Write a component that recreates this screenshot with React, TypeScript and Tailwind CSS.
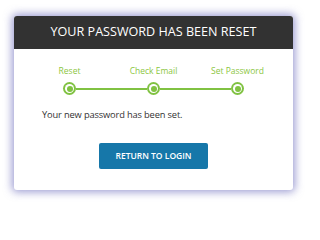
import React from "react";

const GREEN = "bg-[#80c242]";

function Step({ label, first, last }: { label: string; first?: boolean; last?: boolean }) {
  return (
    <div className="flex flex-col items-center">
      <div className="h-[12px] text-[8.5px] leading-[12px] text-[#8cc63f] whitespace-nowrap">{label}</div>
      <div className="mt-[5px] flex w-full items-center">
        <div className={`h-[2px] flex-1 ${first ? "" : GREEN}`} />
        <div className={`flex h-[13px] w-[13px] items-center justify-center rounded-full ${GREEN}`}>
          <div className="flex h-[9px] w-[9px] items-center justify-center rounded-full bg-white">
            <div className={`h-[6px] w-[6px] rounded-full ${GREEN}`} />
          </div>
        </div>
        <div className={`h-[2px] flex-1 ${last ? "" : GREEN}`} />
      </div>
    </div>
  );
}

export default function App() {
  return (
    <div
      className="h-[202px] w-[306px] bg-white pl-[14px] pt-[16px]"
      style={{ fontFamily: '"Open Sans", "Liberation Sans", sans-serif' }}
    >
      <div className="h-[174px] w-[279px] overflow-hidden rounded-[3px] bg-white shadow-[0_0_9px_2px_rgba(90,90,180,0.6)]">
        <div className="flex h-[33px] items-center justify-center bg-[#323232] text-[12.6px] text-white">
          YOUR PASSWORD HAS BEEN RESET
        </div>
        <div className="mx-auto mt-[16px] grid w-[252px] grid-cols-3">
          <Step label="Reset" first />
          <Step label="Check Email" />
          <Step label="Set Password" last />
        </div>
        <div className="mt-[13px] pl-[28px] text-[9.3px] leading-[14px] tracking-[-0.15px] text-[#333]">
          Your new password has been set.
        </div>
        <div className="mt-[21px] flex justify-center">
          <button className="h-[26px] w-[109px] rounded-[2px] bg-[#1677a9] text-[8.5px] font-semibold text-white">
            RETURN TO LOGIN
          </button>
        </div>
      </div>
    </div>
  );
}
